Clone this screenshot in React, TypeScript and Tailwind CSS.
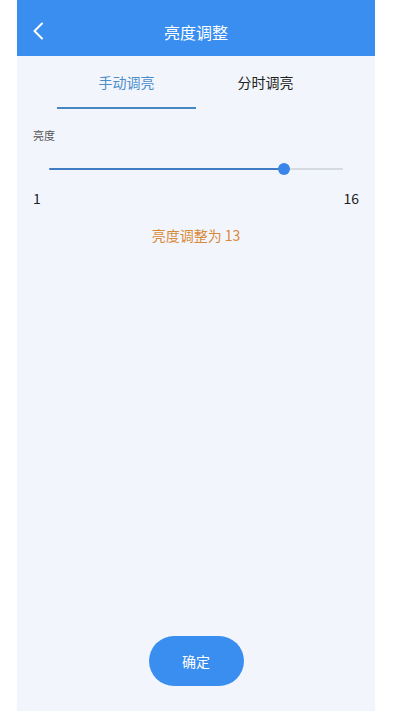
import React, { useState } from 'react';

const FONT = { fontFamily: '"Noto Sans CJK SC", "Liberation Sans", sans-serif' };

const BrightnessPage: React.FC = () => {
  const [tab, setTab] = useState<'manual' | 'timed'>('manual');
  const level = 13;
  const min = 1;
  const max = 16;
  const pct = ((level - min) / (max - min)) * 100;

  return (
    <div className="min-h-[711px] w-full bg-white flex" style={FONT}>
      <div className="ml-[17px] w-[358px] flex flex-col bg-[#f2f6fc]">
        {/* header */}
        <div className="h-[56px] bg-[#3a8ef0] flex items-center relative">
          <button className="absolute left-[13px] top-[21px] w-[16px] h-[20px] flex items-center justify-center">
            <svg width="12" height="18" viewBox="0 0 12 18" fill="none">
              <path d="M10 1.5 L2.5 9 L10 16.5" stroke="white" strokeWidth="2" strokeLinecap="round" strokeLinejoin="round" />
            </svg>
          </button>
          <div className="flex-1 text-center text-white text-[16px] pt-[8px]">亮度调整</div>
        </div>

        {/* tabs */}
        <div className="flex pl-[40px] pr-[38px] pt-[15px]">
          <button onClick={() => setTab('manual')} className="w-[139px] flex flex-col items-center">
            <span className={`text-[14px] leading-[22px] ${tab === 'manual' ? 'text-[#4a8dcb]' : 'text-[#222]'}`}>手动调亮</span>
            <span className={`mt-[14px] h-[2px] w-full ${tab === 'manual' ? 'bg-[#4a86c2]' : 'bg-transparent'}`} />
          </button>
          <button onClick={() => setTab('timed')} className="w-[139px] flex flex-col items-center">
            <span className={`text-[14px] leading-[22px] ${tab === 'timed' ? 'text-[#4a8dcb]' : 'text-[#222]'}`}>分时调亮</span>
            <span className={`mt-[14px] h-[2px] w-full ${tab === 'timed' ? 'bg-[#4a86c2]' : 'bg-transparent'}`} />
          </button>
        </div>

        {/* slider */}
        <div className="pl-[16px] pr-[16px] pt-[18px]">
          <div className="text-[11px] leading-[16px] text-[#555]">亮度</div>
          <div className="mx-[16px] mt-[20px] relative h-[12px] flex items-center">
            <div className="w-full h-[2px] bg-[#d5d9e0] rounded-full" />
            <div className="absolute left-0 h-[2px] bg-[#3f7cc4] rounded-full" style={{ width: `${pct}%` }} />
            <div
              className="absolute w-[12px] h-[12px] rounded-full bg-[#3a86e8] -translate-x-1/2"
              style={{ left: `${pct}%` }}
            />
          </div>
          <div className="flex justify-between mt-[13px] text-[14px] leading-[20px] text-[#222]">
            <span>{min}</span>
            <span>{max}</span>
          </div>
        </div>

        <div className="mt-[17px] text-center text-[14px] leading-[20px] text-[#d9893a]">亮度调整为 {level}</div>

        <div className="flex-1" />

        <div className="flex justify-center pb-[25px]">
          <button className="w-[95px] h-[50px] rounded-full bg-[#3a8ef0] text-white text-[14px]">确定</button>
        </div>
      </div>
    </div>
  );
};

export default function App() {
  return <BrightnessPage />;
}
